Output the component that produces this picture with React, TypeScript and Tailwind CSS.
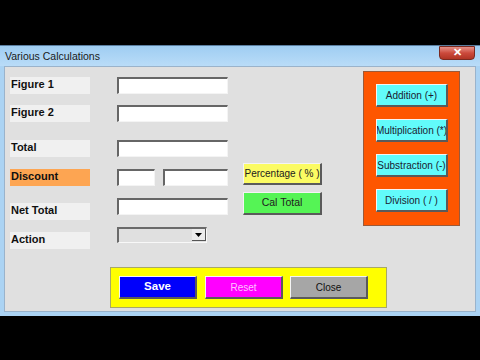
import React from 'react'

const font = { fontFamily: '"Liberation Sans", Arial, sans-serif' }

export default function App() {
  return (
    <div className="w-[480px] h-[360px] bg-black flex flex-col overflow-hidden" style={font}>
      <div className="h-[45px] shrink-0" />

      {/* Window */}
      <div className="flex flex-col bg-[#abd3f3] px-[4px] pb-[4px] w-[480px]">
        {/* Title bar */}
        <div className="h-[21px] -mx-[4px] px-[5px] flex items-center justify-between bg-gradient-to-b from-[#9fcdf2] to-[#b9dcf8] border-t border-[#5a7ea0]">
          <span className="text-[10.5px] text-[#1a1a1a] mt-[1px]">Various Calculations</span>
          <div className="w-[36px] h-[14px] -mt-[7px] rounded-b-[4px] bg-gradient-to-b from-[#e69088] via-[#cc4a3c] to-[#b03424] border border-[#7a2a20] flex items-center justify-center">
            <span className="text-white text-[11px] font-bold leading-none">✕</span>
          </div>
        </div>

        {/* Client area */}
        <div className="bg-[#e0e0e0] h-[246px] border border-[#9ab3cb] flex flex-col">
          <div className="flex h-[200px]">
            {/* Labels + inputs */}
            <div className="flex flex-col pl-[5px] pt-[10px] w-[224px]">
              <Row label="Figure 1" mt="mt-0">
                <Field w="w-[111px]" />
              </Row>
              <Row label="Figure 2" mt="mt-[11px]">
                <Field w="w-[111px]" />
              </Row>
              <Row label="Total" mt="mt-[18px]">
                <Field w="w-[111px]" />
              </Row>
              <Row label="Discount" mt="mt-[12px]" orange>
                <div className="flex gap-[8px]">
                  <Field w="w-[38px]" />
                  <Field w="w-[65px]" />
                </div>
              </Row>
              <Row label="Net Total" mt="mt-[17px]">
                <div className="-mt-[5px]">
                  <Field w="w-[111px]" />
                </div>
              </Row>
              <Row label="Action" mt="mt-[12px]">
                <div className="-mt-[5px] w-[90px] h-[16px] bg-[#e0e0e0] border-t-2 border-l-2 border-[#6a6a6a] border-b border-r border-b-[#f8f8f8] border-r-[#f8f8f8] flex justify-end">
                  <div className="w-[14px] h-[12px] bg-[#ececec] border-b border-r border-[#555] flex items-center justify-center">
                    <svg width="7" height="4" viewBox="0 0 7 4">
                      <path d="M0 0 H7 L3.5 4 Z" fill="#000" />
                    </svg>
                  </div>
                </div>
              </Row>
            </div>

            {/* Middle buttons */}
            <div className="flex flex-col gap-[7px] pt-[96px] ml-[14px] w-[79px]">
              <Btn className="bg-[#fbfb63] text-[#202020] text-[10px] h-[22px] w-[79px]">Percentage ( % )</Btn>
              <Btn className="bg-[#55f455] text-[#202020] text-[10.5px] h-[23px] w-[79px]">Cal Total</Btn>
            </div>

            {/* Operations panel */}
            <div className="ml-[41px] mt-[4px] w-[97px] h-[155px] bg-[#fe5600] border border-[#9a5a3a] flex flex-col gap-[11px] pl-[12px] pt-[12px]">
              <Btn className="bg-[#62fbfb] text-[#1a1a30] text-[10px] h-[23px] w-[72px]">Addition (+)</Btn>
              <Btn className="bg-[#62fbfb] text-[#1a1a30] text-[10px] h-[23px] w-[72px] mt-[1px]">Multiplication (*)</Btn>
              <Btn className="bg-[#62fbfb] text-[#1a1a30] text-[10px] h-[23px] w-[72px] mt-[1px]">Substraction (-)</Btn>
              <Btn className="bg-[#62fbfb] text-[#1a1a30] text-[10px] h-[23px] w-[72px] mt-[1px]">Division ( / )</Btn>
            </div>
          </div>

          {/* Bottom actions */}
          <div className="ml-[105px] w-[277px] h-[41px] bg-[#ffff00] border border-[#a8a868] flex items-center gap-[8px] pl-[8px]">
            <Btn className="bg-[#0000fb] text-white font-bold text-[11.5px] h-[23px] w-[78px]">Save</Btn>
            <Btn className="bg-[#ff00ff] text-[#ffc4ff] text-[10px] h-[23px] w-[78px]">Reset</Btn>
            <Btn className="bg-[#a6a6a6] text-[#101010] text-[10px] h-[23px] w-[78px] -ml-[1px]">Close</Btn>
          </div>
        </div>
      </div>
    </div>
  )
}

function Row({ label, mt, orange, children }: { label: string; mt: string; orange?: boolean; children: React.ReactNode }) {
  return (
    <div className={`flex items-start ${mt}`}>
      <div
        className={`w-[80px] h-[17px] flex items-start pl-[1px] text-[11px] leading-[15px] font-bold text-[#101010] ${
          orange ? 'bg-[#fda552]' : 'bg-[#f0f0f0]'
        }`}
      >
        {label}
      </div>
      <div className="ml-[27px]">{children}</div>
    </div>
  )
}

function Field({ w }: { w: string }) {
  return (
    <div
      className={`${w} h-[17px] bg-white border-t-2 border-l-2 border-[#666] border-b border-r border-b-[#f4f4f4] border-r-[#f4f4f4]`}
    />
  )
}

function Btn({ className, children }: { className: string; children: React.ReactNode }) {
  return (
    <div
      className={`flex items-center justify-center whitespace-nowrap overflow-hidden border-t border-l border-[#f4f4f4] border-b-2 border-r-2 border-b-[#5a5a5a] border-r-[#5a5a5a] ${className}`}
    >
      {children}
    </div>
  )
}
